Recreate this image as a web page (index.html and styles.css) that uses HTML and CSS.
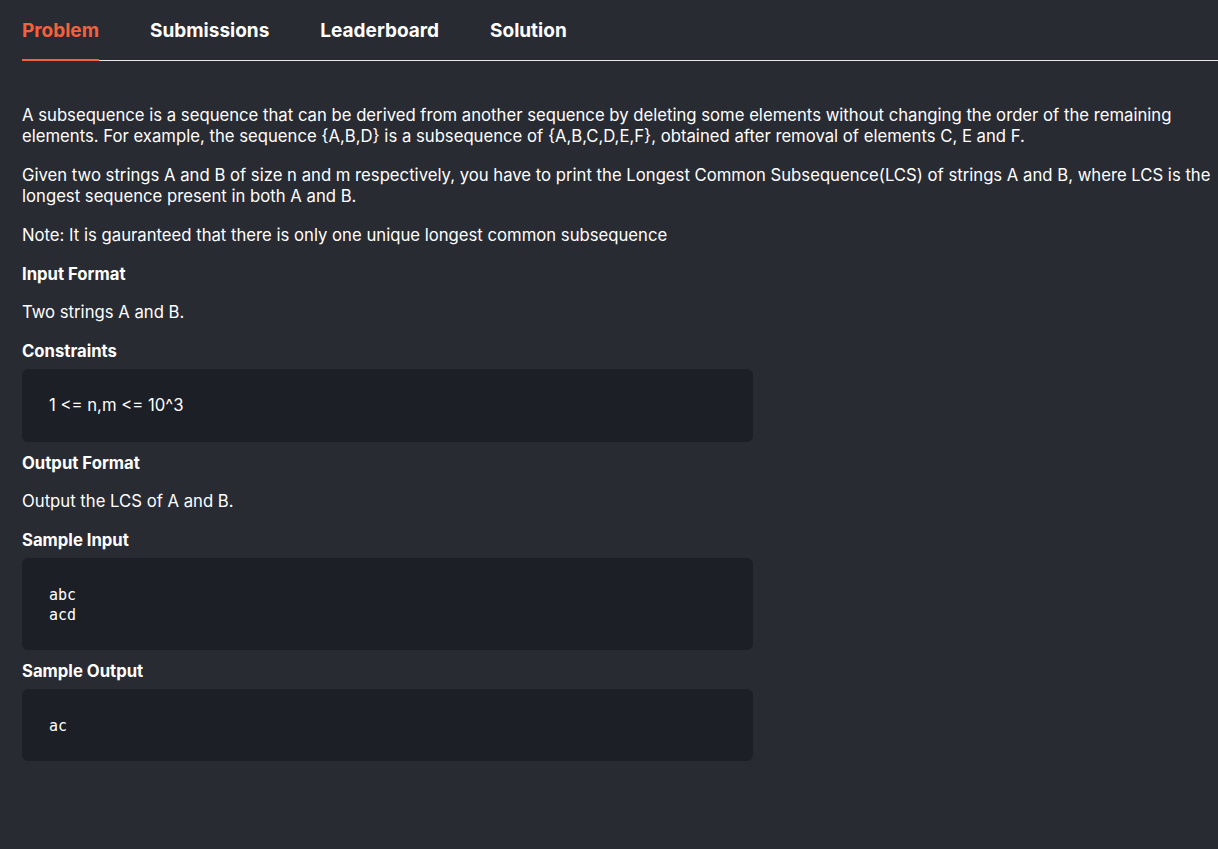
FILE: index.html
```html
<!DOCTYPE html>
<html lang="en">
<head>
<meta charset="utf-8">
<title>Problem</title>
<link rel="stylesheet" href="styles.css">
</head>
<body>
<div class="page">
  <nav class="tabs">
    <a class="tab active">Problem</a>
    <a class="tab">Submissions</a>
    <a class="tab">Leaderboard</a>
    <a class="tab">Solution</a>
  </nav>
  <div class="content">
    <p>A subsequence is a sequence that can be derived from another sequence by deleting some elements without changing the order of the remaining elements. For example, the sequence {A,B,D} is a subsequence of {A,B,C,D,E,F}, obtained after removal of elements C, E and F.</p>
    <p>Given two strings A and B of size n and m respectively, you have to print the Longest Common Subsequence(LCS) of strings A and B, where LCS is the longest sequence present in both A and B.</p>
    <p>Note: It is gauranteed that there is only one unique longest common subsequence</p>
    <h4>Input Format</h4>
    <p>Two strings A and B.</p>
    <h4>Constraints</h4>
    <div class="block">1 &lt;= n,m &lt;= 10^3</div>
    <h4>Output Format</h4>
    <p>Output the LCS of A and B.</p>
    <h4>Sample Input</h4>
    <pre class="block code">abc
acd</pre>
    <h4>Sample Output</h4>
    <pre class="block code">ac</pre>
  </div>
</div>
</body>
</html>
```

FILE: styles.css
```css
html, body {
  margin: 0;
  padding: 0;
  background: #292b33;
  height: 100%;
}
body {
  font-family: "Inter", "Liberation Sans", sans-serif;
  color: #ffffff;
  font-size: 16.7px;
}
.page {
  padding: 0 0 0 22px;
}
.tabs {
  display: flex;
  gap: 51px;
  border-bottom: 1px solid #e8e8e8;
  height: 60px;
  align-items: stretch;
}
.tab {
  font-weight: 700;
  font-size: 19px;
  color: #ffffff;
  display: flex;
  align-items: center;
  padding-top: 2px;
  margin-bottom: -1px;
  border-bottom: 2px solid transparent;
  height: 57px;
  box-sizing: content-box;
}
.tab.active {
  color: #f4623a;
  border-bottom-color: #f4623a;
}
.content {
  padding: 44px 0 0 0;
  line-height: 21px;
}
p {
  margin: 18px 0;
}
.content > p:first-child {
  margin-top: 0;
}
h4 {
  margin: 0 0 7px;
  font-size: 16.7px;
  font-weight: 700;
  line-height: 21px;
}
h4 + p {
  margin-top: 17px;
}
.block {
  width: 731px;
  box-sizing: border-box;
  background: #1d1f26;
  border-radius: 6px;
  padding: 26px 27px 26px;
  margin: 0 0 11px;
  line-height: 21px;
}
.code {
  font-family: "DejaVu Sans Mono", monospace;
  font-size: 15px;
  line-height: 20px;
  padding: 27px 27px 25px;
}
```
